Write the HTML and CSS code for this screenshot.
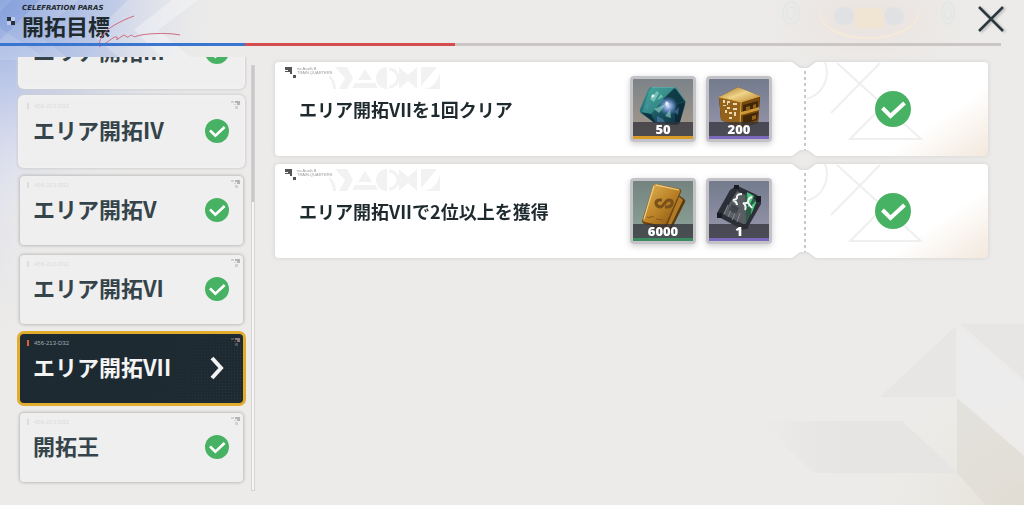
FILE: index.html
```
<!DOCTYPE html>
<html lang="ja">

<head>
    <meta charset="UTF-8">
    <meta name="viewport" content="width=device-width, initial-scale=1.0">
    <title>開拓目標</title>
    <link rel="stylesheet" href="styles.css">
</head>

<body>
    <!-- Shared icons -->
    <svg class="sprite" aria-hidden="true">
        <symbol id="check" viewBox="0 0 36 36">
            <circle cx="18" cy="18" r="18" fill="#48b264" />
            <path d="M7.500 17 L15.500 25 L29.500 12" fill="none" stroke="#fff" stroke-width="4" />
        </symbol>
        <symbol id="corner" viewBox="0 0 10 10">
            <path d="M0 1h3v2H0z M3 4h2v1H3z M4 6h3v3H4z M7 4h1v1H7z" opacity=".5" />
            <path d="M4 1h5v4H6V3H4z" />
        </symbol>
        <symbol id="mark" viewBox="0 0 12 12">
            <path d="M0 0h7v7H5V5H0V4h3V3H0z M8 8h3v3H8z" fill="#555" />
        </symbol>
        <symbol id="shapes" viewBox="0 0 112 22">
            <g fill="#f2f2f2">
                <path d="M6 0h12l6 11-6 11h-8l6-11z" />
                <path d="M36 2l7 11H29z M26 16h20l3 5H23z" />
                <path d="M58 0a11 11 0 0 0 0 22z" />
                <path d="M60 2a9 9 0 0 1 0 18" fill="none" stroke="#f2f2f2" stroke-width="3" />
                <path d="M70 0l9 8 9-8v22l-9-8-9 8z" />
                <path d="M92 0h16L92 19z M95 22c9-1 14-8 16-17v17z" />
                <path d="M0 8c4 2 7 7 7 14H4c0-5-2-9-4-11z" />
            </g>
        </symbol>
        <symbol id="stub-lines" viewBox="0 0 183 95">
            <path d="M21 0c6 17-3 33-19 37 M33 1l84 76H46l26-26 M76 1L27 51" fill="none" stroke="#efeff0"
                stroke-width="2" />
        </symbol>
    </svg>

    <!-- Background artwork -->
    <svg class="bg bg-left" viewBox="0 0 240 505" aria-hidden="true">
        <defs>
            <radialGradient id="blue" gradientUnits="userSpaceOnUse" cx="0" cy="0" r="220">
                <stop offset="0" stop-color="#8ea8de" />
                <stop offset=".5" stop-color="#c3cdea" stop-opacity=".8" />
                <stop offset="1" stop-color="#e6e8f0" stop-opacity="0" />
            </radialGradient>
            <linearGradient id="violet" x2="1">
                <stop offset="0" stop-color="#d5d9f0" />
                <stop offset="1" stop-color="#e8e8ee" stop-opacity="0" />
            </linearGradient>
            <linearGradient id="down" x2="0" y2="1">
                <stop offset="0" stop-color="#fff" />
                <stop offset="1" stop-color="#000" />
            </linearGradient>
            <mask id="fade">
                <rect width="240" height="330" fill="url(#down)" />
            </mask>
        </defs>
        <rect width="60" height="330" fill="url(#violet)" mask="url(#fade)" />
        <rect width="240" height="240" fill="url(#blue)" />
        <path d="M78 0h50L92 35l30 25H70L38 35z" fill="#7f9cd8" opacity=".16" />
        <path d="M12 0h28L0 40V12z" fill="#6f90d6" opacity=".3" />
        <path d="M172 0h26l-40 30 36 30h-30l-30-30z" fill="#fff" opacity=".3" />
        <path d="M0 28l48 32H0z" fill="#fff" opacity=".12" />
    </svg>
    <svg class="bg bg-top" viewBox="0 0 264 65" aria-hidden="true">
        <defs>
            <radialGradient id="haze">
                <stop offset="0" stop-color="#eadfda" />
                <stop offset="1" stop-color="#eadfda" stop-opacity="0" />
            </radialGradient>
        </defs>
        <ellipse cx="108" cy="20" rx="104" ry="50" fill="url(#haze)" opacity=".7" />
        <path d="M96 8h26l2 20H94z" fill="#f4e6c9" opacity=".6" />
        <ellipse cx="84" cy="16" rx="10" ry="9" fill="#d6dde6" opacity=".5" />
        <ellipse cx="134" cy="16" rx="10" ry="9" fill="#d6dde6" opacity=".5" />
        <path d="M60 14c4 32 94 32 98 0" fill="none" stroke="#f5ead9" stroke-width="2" />
        <g fill="none" stroke="#e2e8e6" stroke-width="2">
            <ellipse cx="31" cy="13" rx="8" ry="11" />
            <ellipse cx="31" cy="13" rx="4" ry="6" />
            <ellipse cx="188" cy="13" rx="6" ry="11" />
            <ellipse cx="188" cy="13" rx="3" ry="6" />
        </g>
    </svg>
    <svg class="bg bg-right" viewBox="0 0 264 205" aria-hidden="true">
        <defs>
            <radialGradient id="sand" cx="1" cy="1" r=".6">
                <stop offset="0" stop-color="#e4dfd2" />
                <stop offset="1" stop-color="#eceae4" stop-opacity="0" />
            </radialGradient>
            <linearGradient id="slab" x2="1">
                <stop offset="0" stop-color="#e6e5e3" stop-opacity="0" />
                <stop offset=".4" stop-color="#e6e5e3" />
            </linearGradient>
        </defs>
        <rect width="264" height="205" fill="url(#sand)" />
        <path d="M196 26v71h-76z M200 24h64v56z" fill="#e7e6e5" />
        <path d="M198 28l66 56v72l-66-58z" fill="#eeecec" opacity=".8" />
        <path d="M197 98l67 58v49h-38l-29-32z" fill="#dedbd4" opacity=".6" />
        <path d="M0 121h142l56 52H54z" fill="url(#slab)" />
    </svg>

    <header class="header">
        <div class="title-row">
            <svg class="pixels" viewBox="0 0 8 8" aria-hidden="true">
                <path d="M0 0h4v4H0z M4 4h4v4H4z" fill="#27343a" />
                <path d="M4 0h4v4H4z M0 4h4v4H0z" fill="#fff" opacity=".4" />
            </svg>
            <div class="title">
                <p class="overline">CELEFRATION PARAS</p>
                <h1>開拓目標</h1>
            </div>
            <svg class="signature" viewBox="0 0 84 34" aria-hidden="true">
                <path
                    d="M36 1C22 6 8 14 5 20c-1 3-5 6-3 12 M2 31C10 28 14 22 18 22c4 0-2 4 2 2 4-3 7-5 8-3 0 2 3 1 5-1 2 0 2 3 6 1 6-2 28-4 43-1"
                    fill="none" stroke="#cf6a7b" stroke-width="1" />
            </svg>
            <button class="close" type="button" aria-label="閉じる">
                <svg viewBox="0 0 26 26">
                    <path d="M1 1l24 24M25 1L1 25" stroke="#2b383e" stroke-width="2.500" />
                </svg>
            </button>
        </div>
        <div class="progress">
            <span class="progress-blue"></span>
            <span class="progress-red"></span>
        </div>
    </header>

    <div class="content">
        <nav class="sidebar">
            <div class="areas">
                <button class="area is-done is-lit" type="button">
                    <span class="code">456-213-D32</span>
                    <svg class="corner"><use href="#corner" /></svg>
                    <span class="name">エリア開拓III</span>
                    <svg class="state"><use href="#check" /></svg>
                </button>
                <button class="area is-done is-lit" type="button">
                    <span class="code">456-213-D32</span>
                    <svg class="corner"><use href="#corner" /></svg>
                    <span class="name">エリア開拓IV</span>
                    <svg class="state"><use href="#check" /></svg>
                </button>
                <button class="area is-done" type="button">
                    <span class="code">456-213-D32</span>
                    <svg class="corner"><use href="#corner" /></svg>
                    <span class="name">エリア開拓V</span>
                    <svg class="state"><use href="#check" /></svg>
                </button>
                <button class="area is-done" type="button">
                    <span class="code">456-213-D32</span>
                    <svg class="corner"><use href="#corner" /></svg>
                    <span class="name">エリア開拓VI</span>
                    <svg class="state"><use href="#check" /></svg>
                </button>
                <button class="area is-active" type="button" aria-current="true">
                    <span class="code">456-213-D32</span>
                    <svg class="corner"><use href="#corner" /></svg>
                    <span class="name">エリア開拓VII</span>
                    <svg class="state" viewBox="0 0 24 24">
                        <path d="M7 2l9 10-9 10" fill="none" stroke="#f2f2f2" stroke-width="4" />
                    </svg>
                </button>
                <button class="area is-done" type="button">
                    <span class="code">456-213-D32</span>
                    <svg class="corner"><use href="#corner" /></svg>
                    <span class="name">開拓王</span>
                    <svg class="state"><use href="#check" /></svg>
                </button>
            </div>
            <div class="scrollbar"><span class="thumb"></span></div>
        </nav>

        <main class="goals">
            <article class="ticket">
                <div class="ticket-body">
                    <div class="goal">
                        <div class="stamp">
                            <svg class="mark"><use href="#mark" /></svg>
                            <small>no.Auxifi-B<br>TRAIN.QUARTERS</small>
                            <svg class="shapes"><use href="#shapes" /></svg>
                        </div>
                        <h2>エリア開拓VIIを1回クリア</h2>
                        <div class="item item-gold">
                            <svg class="art" viewBox="0 0 60 60" aria-hidden="true">
                                <defs>
                                    <linearGradient id="gem" x2="1" y2="1">
                                        <stop offset="0" stop-color="#3f9f98" />
                                        <stop offset=".5" stop-color="#1c5c67" />
                                        <stop offset="1" stop-color="#0a2739" />
                                    </linearGradient>
                                    <radialGradient id="shine">
                                        <stop offset="0" stop-color="#dbe6ff" />
                                        <stop offset=".5" stop-color="#849ee0" stop-opacity=".7" />
                                        <stop offset="1" stop-color="#4a7cc0" stop-opacity="0" />
                                    </radialGradient>
                                </defs>
                                <path d="M19 8l22 0q3 0 4 3l7 10q1 2 0 5l-5 17q-1 3-5 3l-20-2-13-9q-3-2-2-5l8-19q1-3 4-3z"
                                    fill="url(#gem)" />
                                <path d="M19 9l22 0-11 12-12 14-9-1 7-22z" fill="#54c0af" opacity=".4" />
                                <path d="M30 20l12-11 9 13-9 4z" fill="#0d3540" opacity=".85" />
                                <path d="M8 33l10 2 5 9-3-1z M42 26l10-3-5 19-5 3z" fill="#0b2836" opacity=".8" />
                                <ellipse cx="35" cy="27" rx="10" ry="10" fill="url(#shine)" />
                                <path d="M17 20l7-8 2 2-5 9z M21 30l12-5-7 9z M32 37l5-6 1 8z M24 21l4-6 2 3z" fill="#a5e4d5"
                                    opacity=".55" />
                                <path d="M24 37l6 3 3 5-9-2z M41 33l5-5-1 8z M12 27l4-3-1 7z" fill="#5f8ec7" opacity=".5" />
                                <path d="M18 17l2-2 2 2-3 2z M32 24l2-2 2 3-3 2z" fill="#fff" opacity=".8" />
                                <path d="M19 8.500h22q2 0 4 3l7 10" fill="none" stroke="#68b9b5" stroke-width="1"
                                    opacity=".7" />
                            </svg>
                            <span class="count">50</span>
                        </div>
                        <div class="item item-violet">
                            <svg class="art" viewBox="0 0 60 60" aria-hidden="true">
                                <defs>
                                    <linearGradient id="roof" x2="1" y2="1">
                                        <stop offset="0" stop-color="#9f6f20" />
                                        <stop offset=".5" stop-color="#f0d48a" />
                                        <stop offset="1" stop-color="#b5832c" />
                                    </linearGradient>
                                </defs>
                                <path d="M10 18l19-10 22 9-2 27-18 5-19-8z" fill="#3d2508" />
                                <path d="M10 18l19-10 22 9-19 6z" fill="url(#roof)" />
                                <path d="M10 18l22 5-1 26-19-8z" fill="#94621a" />
                                <path d="M32 23l19-6-2 27-18 5z" fill="#774a10" />
                                <path d="M34 26l15-4v8l-15 4z M34 37l15-4-1 8-14 4z" fill="#412607" />
                                <path d="M32 33l18-5v3l-18 5z" fill="#d09a34" />
                                <path d="M37 28l4-1v4l-4 1z M44 26l3-1v4l-3 1z M43 37l4-1v4l-4 1z" fill="#94631b" />
                                <path
                                    d="M14 21h2v3h-2z M18 22h3v2h-2v2h-1z M24 24h4v2h-4z M14 26h3v1h-3z M18 28h3v2h-3z M24 29h4v2h-4z M16 31h2v3h-2z M20 33h3v2h-3z M25 33h2v4h-2z M20 38h3v2h-3z"
                                    fill="#e9dab3" />
                                <path d="M10 18l22 5-1 26 M32 23l19-6" fill="none" stroke="#dfb14d" stroke-width="1" />
                            </svg>
                            <span class="count">200</span>
                        </div>
                    </div>
                    <div class="stub">
                        <svg class="stub-lines"><use href="#stub-lines" /></svg>
                        <svg class="done" role="img" aria-label="達成"><use href="#check" /></svg>
                    </div>
                </div>
            </article>

            <article class="ticket">
                <div class="ticket-body">
                    <div class="goal">
                        <div class="stamp">
                            <svg class="mark"><use href="#mark" /></svg>
                            <small>no.Auxifi-B<br>TRAIN.QUARTERS</small>
                            <svg class="shapes"><use href="#shapes" /></svg>
                        </div>
                        <h2>エリア開拓VIIで2位以上を獲得</h2>
                        <div class="item item-green">
                            <svg class="art" viewBox="0 0 60 60" aria-hidden="true">
                                <defs>
                                    <linearGradient id="bar" x2="1" y2="1">
                                        <stop offset="0" stop-color="#e2b75a" />
                                        <stop offset=".5" stop-color="#bd8428" />
                                        <stop offset="1" stop-color="#7f4f12" />
                                    </linearGradient>
                                </defs>
                                <path d="M43 12l8 6q2 1 1 3L38 49q-1 2-4 2l-16-4z" fill="#5d3a0e" />
                                <path d="M44 14l6 5-14 29-8-1z" fill="#b07b27" />
                                <path d="M23 3l24 5q2 1 1 3L34 45q-1 2-3 2L11 43q-2-1-2-3L20 5q1-2 3-2z" fill="#6b4210" />
                                <path d="M23 3l23 5q2 1 1 3L33 43q-1 2-3 2L12 41q-3-1-2-3L20 5q1-2 3-2z" fill="url(#bar)" />
                                <path d="M23 4l23 5M21 5L11 38" fill="none" stroke="#f4d58b" stroke-width="1" />
                                <path d="M29 19h-2q-4 0-4 3t4 4q2 0 4-3l1-1q2-3 4-3 4 0 3 4-1 3-5 3h-2" fill="none"
                                    stroke="#79501a" stroke-width="3" />
                                <path d="M14 36l3 1 1-2 3 1M23 38l7 1" fill="none" stroke="#875b1d" stroke-width="1" />
                            </svg>
                            <span class="count">6000</span>
                        </div>
                        <div class="item item-violet">
                            <svg class="art" viewBox="0 0 60 60" aria-hidden="true">
                                <path d="M27 5l4 1 17 8 4 5 0 4-13 23-5 3-24-13-2-4 13-23z" fill="#2b3038" />
                                <path d="M28 10l20 10-12 24-22-11z" fill="#5a5e64" />
                                <path d="M36 12l12 8-11 22z" fill="#2d5d47" />
                                <path d="M38 11l7 4-6 12z M43 24l5-5-6 15z" fill="#4cc882" />
                                <path d="M33 13q-6 0-5 4-1 2-4 2 4 2 4 5M43 16q-4 1-4 5-2 2-5 1 4 3 2 7M39 22l4 5"
                                    fill="none" stroke="#f0f7f2" stroke-width="2" />
                                <path d="M19 24l-4 9M23 27l-4 9M27 30l-4 9M31 32l-3 9" stroke="#85898f"
                                    stroke-width="1" />
                                <path d="M23 23l7 4-3 6-7-4z" fill="#34383d" opacity=".7" />
                                <path d="M25 4h5v4h-5z M47 15h5v6h-5z M8 32h5v5H8z M33 43h6v5h-6z" fill="#171b22" />
                            </svg>
                            <span class="count">1</span>
                        </div>
                    </div>
                    <div class="stub">
                        <svg class="stub-lines"><use href="#stub-lines" /></svg>
                        <svg class="done" role="img" aria-label="達成"><use href="#check" /></svg>
                    </div>
                </div>
            </article>
        </main>
    </div>
</body>

</html>
```
FILE: styles.css
```
* {
    margin: 0;
    padding: 0;
    box-sizing: border-box;
}

body {
    position: relative;
    display: flex;
    flex-direction: column;
    height: 100vh;
    overflow: hidden;
    background: #ecebe9;
    color: #1f2a2f;
    font-family: "Noto Sans CJK JP", sans-serif;
}

button {
    border: none;
    background: none;
    font-family: inherit;
    cursor: pointer;
}

.sprite {
    position: absolute;
    width: 0;
    height: 0;
}

/* background */
.bg {
    position: absolute;
    z-index: -1;
}

.bg-left {
    top: 0;
    left: 0;
    width: 240px;
}

.bg-top {
    top: 0;
    right: 0;
    width: 264px;
}

.bg-right {
    right: 0;
    bottom: 0;
    width: 264px;
}

/* header */
.title-row {
    display: flex;
    align-items: flex-start;
    height: 43px;
    padding: 4px 20px 0 7px;
}

.pixels {
    width: 8px;
    height: 8px;
    margin: 13px 7px 0 0;
}

.title {
    width: 88px;
}

.overline {
    font-family: "DejaVu Sans", sans-serif;
    font-size: 7px;
    font-weight: bold;
    font-style: italic;
    line-height: 8px;
    white-space: nowrap;
}

.title h1 {
    font-size: 22px;
    font-weight: 700;
    line-height: 26px;
    white-space: nowrap;
}

.signature {
    width: 84px;
    height: 34px;
    margin: 11px auto 0 -12px;
    overflow: visible;
}

.close {
    width: 26px;
    height: 26px;
    margin-top: 2px;
    filter: drop-shadow(2px 1px 1px #bbb);
}

.close svg {
    display: block;
}

.progress {
    display: flex;
    height: 3px;
    margin-right: 23px;
    background: #c9c6c5;
}

.progress-blue {
    width: 24.5%;
    background: #3a76cf;
}

.progress-red {
    width: 21%;
    background: #d54b4e;
}

.content {
    display: flex;
    flex: 1;
    gap: 20px;
    min-height: 0;
    padding: 11px 36px 14px 16px;
}

/* area list */
.sidebar {
    display: flex;
    gap: 4px;
    width: 239px;
}

.areas {
    display: flex;
    flex: 1;
    flex-direction: column;
    justify-content: flex-end;
    gap: 10px;
    padding: 0 4px 9px;
    overflow: hidden;
}

.area {
    position: relative;
    display: flex;
    flex-shrink: 0;
    align-items: center;
    justify-content: space-between;
    height: 69px;
    padding: 0 14px 2px 13px;
    border-radius: 4px;
    background: #efefef;
    box-shadow: 0 0 3px 1px #bdbbbb;
    color: #35444a;
    font-size: 22px;
    font-weight: 700;
    line-height: 30px;
}

.area.is-lit {
    box-shadow: 0 0 0 2px #f1f1f2, 0 0 3px 3px #d0cfd2;
}

.area.is-active {
    background: linear-gradient(110deg, #1d2a32 60%, transparent), radial-gradient(#2c3b43 1px, transparent 1px) 0 0 / 3px 3px, #1d2a32;
    box-shadow: 0 0 0 3px #e2ac2f;
    color: #f4f4f4;
}

.name {
    padding-bottom: 4px;
}

.code {
    position: absolute;
    top: 6px;
    left: 7px;
    padding-left: 5px;
    border-left: 2px solid #dcdcdc;
    color: #dcdcdc;
    font-family: "Liberation Sans", sans-serif;
    font-size: 6px;
    font-weight: 400;
    line-height: 6px;
}

.is-active .code {
    border-color: #e2602f;
    color: #a3aaae;
}

.corner {
    position: absolute;
    top: 3px;
    right: 2px;
    width: 10px;
    height: 10px;
    fill: #b4b4b4;
}

.is-active .corner {
    fill: #87787a;
}

.state {
    width: 24px;
    height: 24px;
}

.scrollbar {
    width: 4px;
    margin-top: 8px;
    border: 1px solid #d4d3d2;
    background: #f6f6f6;
}

.thumb {
    display: block;
    height: 32%;
    background: #c8c7c9;
}

/* tickets */
.goals {
    display: flex;
    flex: 1;
    flex-direction: column;
    gap: 8px;
    padding-top: 5px;
}

.ticket {
    filter: drop-shadow(0 0 2px #d2d0ce);
}

.ticket-body {
    display: flex;
    min-height: 94px;
    border-radius: 4px;
    background: linear-gradient(325deg, #f3e8dc, #fff 12%);
    clip-path: polygon(0 0, calc(100% - 196px) 0, calc(100% - 188px) 6px, calc(100% - 180px) 6px, calc(100% - 172px) 0, 100% 0, 100% 100%, calc(100% - 172px) 100%, calc(100% - 180px) calc(100% - 6px), calc(100% - 188px) calc(100% - 6px), calc(100% - 196px) 100%, 0 100%);
}

.goal {
    position: relative;
    display: flex;
    flex: 1;
    align-items: center;
    gap: 10px;
    padding: 0 32px 0 24px;
}

.goal h2 {
    flex: 1;
    font-size: 18px;
    font-weight: 700;
    line-height: 26px;
}

.stamp {
    position: absolute;
    top: 5px;
    left: 10px;
    display: flex;
    align-items: flex-start;
}

.mark {
    width: 12px;
    height: 12px;
}

.stamp small {
    width: 32px;
    color: #999;
    font-family: "Liberation Sans", sans-serif;
    font-size: 4px;
    line-height: 4px;
    white-space: nowrap;
}

.shapes {
    width: 112px;
    height: 22px;
}

.item {
    display: flex;
    flex-direction: column;
    width: 66px;
    height: 66px;
    border: 3px solid #c3c2c7;
    border-radius: 4px;
    box-shadow: 0 2px 6px #ccc;
}

.item-gold {
    background: linear-gradient(#7c8389, #a79a8a);
}

.item-violet {
    background: linear-gradient(#737b8d, #9b98ae);
}

.item-green {
    background: linear-gradient(#75837f, #8ea69b);
}

.art {
    width: 60px;
    height: 60px;
    margin-bottom: -17px;
}

.count {
    z-index: 1;
    border-bottom: 3px solid;
    background: rgba(50, 50, 58, 0.75);
    color: #fff;
    font-family: "Open Sans", sans-serif;
    font-size: 13px;
    font-weight: 800;
    line-height: 14px;
    text-align: center;
}

.item-gold .count {
    border-color: #d99b27;
}

.item-violet .count {
    border-color: #7c68bd;
}

.item-green .count {
    border-color: #3b8c5e;
}

.stub {
    position: relative;
    display: flex;
    align-items: center;
    justify-content: center;
    width: 184px;
    padding-right: 6px;
    background: repeating-linear-gradient(transparent 0 3px, #c9c9c9 3px 6px) left / 2px 100% no-repeat;
}

.stub-lines {
    position: absolute;
    top: 0;
    left: 0;
    width: 183px;
    height: 95px;
}

.done {
    position: relative;
    width: 36px;
    height: 36px;
}
```
